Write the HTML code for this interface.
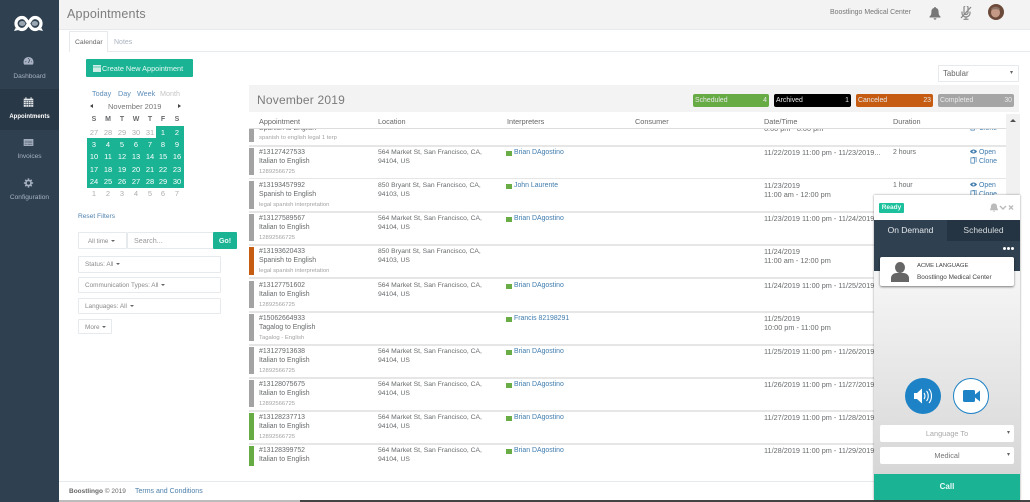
<!DOCTYPE html>
<html><head><meta charset="utf-8"><title>Appointments</title>
<style>
*{box-sizing:border-box}
html,body{margin:0;padding:0}
body{width:1030px;height:502px;overflow:hidden;position:relative;background:#fff;font-family:"Liberation Sans",sans-serif;font-size:6.9px;color:#676a6c;line-height:9px}
.a,.a>*{position:absolute}
.a{white-space:nowrap;filter:blur(.25px)}
.side{left:0;top:0;width:59px;height:502px;background:#2f4050}
.nav{left:0;width:59px;height:41px;text-align:center;color:#a7b1c2;font-size:6.6px}
.nav span{position:absolute;left:0;right:0;top:25px}
.nav svg{position:absolute;left:23px;top:8px}
.box{border:1px solid #e7eaec;background:#fff;border-radius:1px;color:#8a8a8a;font-size:6.4px;padding:3px 6px;white-space:nowrap}
.car{display:inline-block;border-top:2.5px solid #666;border-left:2.5px solid transparent;border-right:2.5px solid transparent;vertical-align:1px;margin-left:1px}
.cal{font-size:7.5px;text-align:center;width:14px;color:#676a6c}
.w{color:#fff}.g{color:#aeaeae}
.hd{font-weight:700;font-size:7px;top:115px}
.badge{top:94px;height:13px;border-radius:2px;color:#e9e9e9;font-size:6.9px;line-height:13px;padding:0 2px}
.badge b{font-weight:400;position:absolute;right:2px}
.sep{left:249px;width:757px;height:1.5px;background:#e6e6e6}
.r{left:249px;width:757px;height:30px}
.r>*{position:absolute;white-space:nowrap}
.bar{left:0;top:0;width:5px;height:27px;background:#a3a3a3}
.id{left:10px;top:0}.lg{left:10px;top:9px}.sb{left:10px;top:19.5px;font-size:5.9px;color:#a3a3a3}
.l1{left:129px;top:0;font-size:6.75px}.l2{left:129px;top:9px;font-size:6.75px}
.sq{left:257px;top:3px;width:6px;height:5px;background:#6aac46}
.nm{left:265px;top:0;color:#3f7cae}
.d1{left:515px;top:0;font-size:7.3px}.d2{left:515px;top:9px;font-size:7.3px}
.du{left:644px;top:0}
.op{left:721px;top:0;color:#3f7cae}.cl{left:721px;top:9px;color:#3f7cae}
.ic{display:inline-block;width:7px;height:7px;margin-right:2px;vertical-align:-1px}
.th{top:117px;color:#666;font-size:7.3px}
</style></head>
<body>

<div class="a" style="left:0;top:0;width:1030px;height:502px">
<div style="left:249px;top:85px;width:770px;height:27px;background:#f3f3f3"></div>
<div style="left:257px;top:92px;font-size:12px;line-height:17px;color:#7b7b7b;letter-spacing:.2px">November 2019</div>

<div class="badge" style="left:693px;width:76px;background:#67ab45">Scheduled<b>4</b></div>
<div class="badge" style="left:774px;width:77px;background:#000">Archived<b>1</b></div>
<div class="badge" style="left:856px;width:77px;background:#c55c11">Canceled<b>23</b></div>
<div class="badge" style="left:938px;width:76px;background:#a5a5a5">Completed<b>30</b></div>

<div class="box" style="left:938px;top:65px;width:81px;height:17px;color:#666;font-size:7.8px;padding:3px 4px">Tabular<span style="position:absolute;right:5px;top:3px;font-size:6px">▾</span></div>

<div class="th" style="left:259px">Appointment</div>
<div class="th" style="left:378px">Location</div>
<div class="th" style="left:507px">Interpreters</div>
<div class="th" style="left:635px">Consumer</div>
<div class="th" style="left:764px">Date/Time</div>
<div class="th" style="left:893px">Duration</div>

<div style="left:249px;top:129px;width:757px;height:16px;overflow:hidden">
 <div class="a" style="left:0;top:0;width:757px;height:16px;filter:none">
  <div style="left:0;top:0;width:5px;height:13px;background:#a3a3a3"></div>
  <div style="left:10px;top:-5px">Spanish to English</div>
  <div style="left:10px;top:5px;font-size:5.9px;color:#a3a3a3">spanish to english legal 1 terp</div>
  <div style="left:515px;top:-5px;font-size:7.3px">6:00 pm - 8:00 pm</div>
  <div style="left:721px;top:-5px;color:#3f7cae"><svg class="ic" viewBox="0 0 8 8"><path d="M1 1h4v6H1zM3 0h4v6" fill="none" stroke="#3f7cae" stroke-width=".8"/></svg>Clone</div>
 </div>
</div>
<div class="sep" style="top:128px;height:1px;background:#ddd"></div>
<div class="sep" style="top:145px"></div>

<div class="r" style="top:148px"><div class="bar"></div><div class="id">#13127427533</div><div class="lg">Italian to English</div><div class="sb">12892566725</div><div class="l1">564 Market St, San Francisco, CA,</div><div class="l2">94104, US</div><div class="sq"></div><div class="nm">Brian DAgostino</div><div class="d1">11/22/2019 11:00 pm - 11/23/2019...</div><div class="du">2 hours</div><div class="op"><svg class="ic" viewBox="0 0 8 8"><path d="M0 4c2-3 6-3 8 0-2 3-6 3-8 0z" fill="#3f7cae"/><circle cx="4" cy="4" r="1.2" fill="#fff"/></svg>Open</div><div class="cl"><svg class="ic" viewBox="0 0 8 8"><path d="M1 1h4v6H1zM3 0h4v6" fill="none" stroke="#3f7cae" stroke-width=".8"/></svg>Clone</div></div>
<div class="sep" style="top:177.5px"></div>

<div class="r" style="top:181px"><div class="bar" style="height:28px"></div><div class="id">#13193457992</div><div class="lg">Spanish to English</div><div class="sb">legal spanish interpretation</div><div class="l1">850 Bryant St, San Francisco, CA,</div><div class="l2">94103, US</div><div class="sq"></div><div class="nm">John Laurente</div><div class="d1">11/23/2019</div><div class="d2">11:00 am - 12:00 pm</div><div class="du">1 hour</div><div class="op"><svg class="ic" viewBox="0 0 8 8"><path d="M0 4c2-3 6-3 8 0-2 3-6 3-8 0z" fill="#3f7cae"/><circle cx="4" cy="4" r="1.2" fill="#fff"/></svg>Open</div><div class="cl"><svg class="ic" viewBox="0 0 8 8"><path d="M1 1h4v6H1zM3 0h4v6" fill="none" stroke="#3f7cae" stroke-width=".8"/></svg>Clone</div></div>
<div class="sep" style="top:211px"></div>

<div class="r" style="top:214px"><div class="bar"></div><div class="id">#13127589567</div><div class="lg">Italian to English</div><div class="sb">12892566725</div><div class="l1">564 Market St, San Francisco, CA,</div><div class="l2">94104, US</div><div class="sq"></div><div class="nm">Brian DAgostino</div><div class="d1">11/23/2019 11:00 pm - 11/24/2019...</div></div>
<div class="sep" style="top:244px"></div>

<div class="r" style="top:247px"><div class="bar" style="background:#c55c11;height:28px"></div><div class="id">#13193620433</div><div class="lg">Spanish to English</div><div class="sb">legal spanish interpretation</div><div class="l1">850 Bryant St, San Francisco, CA,</div><div class="l2">94103, US</div><div class="d1">11/24/2019</div><div class="d2">11:00 am - 12:00 pm</div></div>
<div class="sep" style="top:277px"></div>

<div class="r" style="top:281px"><div class="bar"></div><div class="id">#13127751602</div><div class="lg">Italian to English</div><div class="sb">12892566725</div><div class="l1">564 Market St, San Francisco, CA,</div><div class="l2">94104, US</div><div class="sq"></div><div class="nm">Brian DAgostino</div><div class="d1">11/24/2019 11:00 pm - 11/25/2019...</div></div>
<div class="sep" style="top:311px"></div>

<div class="r" style="top:314px"><div class="bar"></div><div class="id">#15062664933</div><div class="lg">Tagalog to English</div><div class="sb">Tagalog - English</div><div class="sq"></div><div class="nm">Francis 82198291</div><div class="d1">11/25/2019</div><div class="d2">10:00 pm - 11:00 pm</div></div>
<div class="sep" style="top:344px"></div>

<div class="r" style="top:347px"><div class="bar"></div><div class="id">#13127913638</div><div class="lg">Italian to English</div><div class="sb">12892566725</div><div class="l1">564 Market St, San Francisco, CA,</div><div class="l2">94104, US</div><div class="sq"></div><div class="nm">Brian DAgostino</div><div class="d1">11/25/2019 11:00 pm - 11/26/2019...</div></div>
<div class="sep" style="top:377px"></div>

<div class="r" style="top:380px"><div class="bar"></div><div class="id">#13128075675</div><div class="lg">Italian to English</div><div class="sb">12892566725</div><div class="l1">564 Market St, San Francisco, CA,</div><div class="l2">94104, US</div><div class="sq"></div><div class="nm">Brian DAgostino</div><div class="d1">11/26/2019 11:00 pm - 11/27/2019...</div></div>
<div class="sep" style="top:410px"></div>

<div class="r" style="top:413px"><div class="bar" style="background:#67ab45"></div><div class="id">#13128237713</div><div class="lg">Italian to English</div><div class="sb">12892566725</div><div class="l1">564 Market St, San Francisco, CA,</div><div class="l2">94104, US</div><div class="sq"></div><div class="nm">Brian DAgostino</div><div class="d1">11/27/2019 11:00 pm - 11/28/2019...</div></div>
<div class="sep" style="top:443px"></div>

<div class="r" style="top:446px;height:21px;overflow:hidden"><div class="bar" style="background:#67ab45;height:20px"></div><div class="id">#13128399752</div><div class="lg">Italian to English</div><div class="l1">564 Market St, San Francisco, CA,</div><div class="l2">94104, US</div><div class="sq"></div><div class="nm">Brian DAgostino</div><div class="d1">11/28/2019 11:00 pm - 11/29/2019...</div></div>

<!-- scrollbar -->
<div style="left:1006px;top:114px;width:14px;height:386px;background:#f1f1f1"></div>
<div style="left:1010px;top:119px;border-bottom:3.5px solid #505050;border-left:3px solid transparent;border-right:3px solid transparent"></div>

<!-- header -->
<div style="left:59px;top:0;width:971px;height:30px;background:#f3f3f3;border-bottom:1px solid #e7eaec"></div>
<div style="left:67px;top:5px;font-size:12.5px;line-height:18px;color:#7d7d7d;letter-spacing:.2px">Appointments</div>
<div style="left:830px;top:8px;font-size:6.95px;color:#777;line-height:10px">Boostlingo Medical Center</div>
<svg style="left:929px;top:7px" width="12" height="13" viewBox="0 0 12 13"><path d="M6 0c.6 0 1 .4 1 1 2 .5 2.600 2 2.600 4 0 2.400.7 3.600 1.900 4.600v.9H.5v-.9C1.700 8.600 2.400 7.400 2.400 5c0-2 .6-3.500 2.600-4 0-.6.400-1 1-1zM4.600 11.200h2.800a1.400 1.400 0 0 1-2.800 0z" fill="#777"/></svg>
<svg style="left:960px;top:6px" width="12" height="14" viewBox="0 0 12 14"><path d="M4 1.500a2 2 0 0 1 4 0v5a2 2 0 0 1-4 0zM2 5.500v1.500a4 4 0 0 0 8 0V5.500M6 11v2M3.500 13.300h5" fill="none" stroke="#888" stroke-width="1.200"/><path d="M1 12L11 1" stroke="#888" stroke-width="1.300"/></svg>
<svg style="left:988px;top:4px" width="16" height="16" viewBox="0 0 16 16"><circle cx="8" cy="8" r="8" fill="#6b4a3a"/><ellipse cx="7.500" cy="8.500" rx="4.500" ry="5" fill="#c49a86"/><path d="M3 5c2-3 7-3 9 0l-1 1c-2-1-5-1-7 0z" fill="#8c7264"/></svg>

<!-- tabs -->
<div style="left:108px;top:51px;width:922px;height:1px;background:#e7eaec"></div>
<div style="left:69px;top:31px;width:39px;height:21px;background:#fff;border:1px solid #e7eaec;border-bottom:none"></div>
<div style="left:75px;top:38px;font-size:6.8px;color:#666">Calendar</div>
<div style="left:114px;top:38px;font-size:7px;color:#a9b4bf">Notes</div>

<!-- create -->
<div style="left:86px;top:59px;width:107px;height:18px;background:#1ab394;border-radius:1px"></div>
<svg style="left:93px;top:64px" width="8" height="8" viewBox="0 0 8 8"><path d="M0 1h8v7H0z" fill="#cfeee7"/><path d="M0 3h8" stroke="#1ab394" stroke-width=".6"/></svg>
<div style="left:102px;top:63.5px;color:#e8f8f4;font-size:7.3px">Create New Appointment</div>

<!-- calendar -->
<div style="left:92px;top:89px;color:#5d8db8;font-size:7.2px">Today</div>
<div style="left:118px;top:89px;color:#5d8db8;font-size:7.2px">Day</div>
<div style="left:137px;top:89px;color:#5d8db8;font-size:7.2px">Week</div>
<div style="left:160px;top:89px;color:#c4c4c4;font-size:7.2px">Month</div>
<div style="left:90px;top:104px;border-right:3.5px solid #444;border-top:2.5px solid transparent;border-bottom:2.5px solid transparent"></div>
<div style="left:178px;top:104px;border-left:3.5px solid #444;border-top:2.5px solid transparent;border-bottom:2.5px solid transparent"></div>
<div style="left:108px;top:102px;font-size:7.5px;color:#777">November 2019</div>

<div style="left:87px;top:138px;width:97px;height:50px;background:#1ab394"></div>
<div style="left:156px;top:126px;width:28px;height:12px;background:#1ab394"></div>

<div class="cal hd" style="left:87px">S</div><div class="cal hd" style="left:101px">M</div><div class="cal hd" style="left:115px">T</div><div class="cal hd" style="left:129px">W</div><div class="cal hd" style="left:143px">T</div><div class="cal hd" style="left:156px">F</div><div class="cal hd" style="left:170px">S</div>

<div class="cal g" style="left:87px;top:128px">27</div><div class="cal g" style="left:101px;top:128px">28</div><div class="cal g" style="left:115px;top:128px">29</div><div class="cal g" style="left:129px;top:128px">30</div><div class="cal g" style="left:143px;top:128px">31</div><div class="cal w" style="left:156px;top:128px">1</div><div class="cal w" style="left:170px;top:128px">2</div>

<div class="cal w" style="left:87px;top:140px">3</div><div class="cal w" style="left:101px;top:140px">4</div><div class="cal w" style="left:115px;top:140px">5</div><div class="cal w" style="left:129px;top:140px">6</div><div class="cal w" style="left:143px;top:140px">7</div><div class="cal w" style="left:156px;top:140px">8</div><div class="cal w" style="left:170px;top:140px">9</div>

<div class="cal w" style="left:87px;top:152px">10</div><div class="cal w" style="left:101px;top:152px">11</div><div class="cal w" style="left:115px;top:152px">12</div><div class="cal w" style="left:129px;top:152px">13</div><div class="cal w" style="left:143px;top:152px">14</div><div class="cal w" style="left:156px;top:152px">15</div><div class="cal w" style="left:170px;top:152px">16</div>

<div class="cal w" style="left:87px;top:164.5px">17</div><div class="cal w" style="left:101px;top:164.5px">18</div><div class="cal w" style="left:115px;top:164.5px">19</div><div class="cal w" style="left:129px;top:164.5px">20</div><div class="cal w" style="left:143px;top:164.5px">21</div><div class="cal w" style="left:156px;top:164.5px">22</div><div class="cal w" style="left:170px;top:164.5px">23</div>

<div class="cal w" style="left:87px;top:176.5px">24</div><div class="cal w" style="left:101px;top:176.5px">25</div><div class="cal w" style="left:115px;top:176.5px">26</div><div class="cal w" style="left:129px;top:176.5px">27</div><div class="cal w" style="left:143px;top:176.5px">28</div><div class="cal w" style="left:156px;top:176.5px">29</div><div class="cal w" style="left:170px;top:176.5px">30</div>

<div class="cal g" style="left:87px;top:189px">1</div><div class="cal g" style="left:101px;top:189px">2</div><div class="cal g" style="left:115px;top:189px">3</div><div class="cal g" style="left:129px;top:189px">4</div><div class="cal g" style="left:143px;top:189px">5</div><div class="cal g" style="left:156px;top:189px">6</div><div class="cal g" style="left:170px;top:189px">7</div>

<!-- filters -->
<div style="left:78px;top:212px;color:#4f81ad;font-size:6.6px">Reset Filters</div>
<div class="box" style="left:78px;top:232px;width:49px;height:17px;font-size:6.2px;padding:4px 9px">All time <span class="car"></span></div>
<div class="box" style="left:127px;top:232px;width:87px;height:17px;font-size:7.2px;color:#999;padding:3px 6px">Search...</div>
<div style="left:213px;top:232px;width:24px;height:17px;background:#1ab394;border-radius:1px;color:#eafaf6;text-align:center;font-size:7.2px;font-weight:700;line-height:17px">Go!</div>
<div class="box" style="left:78px;top:256px;width:143px;height:17px">Status: All <span class="car"></span></div>
<div class="box" style="left:78px;top:277px;width:143px;height:16px">Communication Types: All <span class="car"></span></div>
<div class="box" style="left:78px;top:298px;width:143px;height:16px">Languages: All <span class="car"></span></div>
<div class="box" style="left:78px;top:319px;width:34px;height:15px;padding:2.5px 6px">More <span class="car"></span></div>

<!-- footer -->
<div style="left:59px;top:481px;width:815px;height:1px;background:#e7eaec"></div>
<div style="left:69px;top:487px;font-size:6.5px;color:#666"><b>Boostlingo</b> © 2019</div>
<div style="left:135px;top:487px;font-size:7px;color:#4f81ad">Terms and Conditions</div>
<div style="left:0;top:500px;width:1030px;height:2px;background:linear-gradient(90deg,#111 0,#111 34px,#bbb 34px,#bbb 300px,#444 300px,#444 1030px)"></div>

<!-- sidebar -->
<div class="side"></div>
<svg style="left:14px;top:15px" width="29" height="17" viewBox="0 0 29 17"><path d="M8 2.500a6 6 0 1 0 0 12c2.500 0 4-1.500 6.500-6 2.500-4.500 4-6 6.500-6a6 6 0 1 1 0 12c-2.500 0-4-1.500-6.500-6-2.500-4.500-4-6-6.500-6z" fill="#2f4050" stroke="#fff" stroke-width="3.200"/><ellipse cx="8.200" cy="8.500" rx="3.200" ry="2.500" fill="#9aa6b1"/><ellipse cx="20.800" cy="8.500" rx="3.200" ry="2.500" fill="#9aa6b1"/><path d="M1.500 13l-1.500 3 4.500-1zM27.500 13l1.500 3-4.500-1z" fill="#fff"/></svg>

<div class="nav" style="top:47px"><svg width="11" height="10" viewBox="0 0 15 13" style="top:9px"><path d="M7.500 1a6.800 6.800 0 0 0-6.800 6.800c0 1.400.3 2.600 1 3.700h11.600c.7-1.100 1-2.300 1-3.700A6.800 6.800 0 0 0 7.500 1z" fill="#a7b1c2"/><path d="M7.500 9l2-5M3 7.500h1.500M11 7.500h1M7.500 2.500v1.500" stroke="#2f4050" stroke-width="1"/></svg><span>Dashboard</span></div>

<div style="left:0;top:89px;width:59px;height:41px;background:#293846"></div>
<div class="nav" style="top:90px;color:#fff"><svg width="11" height="10" viewBox="0 0 15 13" style="top:7px"><path d="M1 2h13v11H1z" fill="#e8ebee"/><path d="M4 0v3M11 0v3" stroke="#e8ebee" stroke-width="1.500"/><path d="M1 4.500h13M1 7.200h13M1 10h13M4.200 4.500V13M7.500 4.500V13M10.800 4.500V13" stroke="#293846" stroke-width=".7"/></svg><span style="top:22.5px;font-weight:700;font-size:6px">Appointments</span></div>

<div class="nav" style="top:131px"><svg width="11" height="9" viewBox="0 0 15 13" style="top:6.5px"><path d="M.5 1.500h14v10H.5z" fill="#a7b1c2"/><path d="M2 4.500h11M2 7h3M6 7h7M2 9h3M6 9h7" stroke="#2f4050" stroke-width=".7"/></svg><span style="top:21px">Invoices</span></div>

<div class="nav" style="top:172px"><svg width="11" height="10" viewBox="0 0 13 13" style="top:6px"><circle cx="6.500" cy="6.500" r="3.300" fill="none" stroke="#a7b1c2" stroke-width="2.200"/><path d="M6.500 .5v2.500M6.500 10v2.500M.5 6.500h2.500M10 6.500h2.500M2.300 2.300L4 4M9 9l1.700 1.700M10.700 2.300L9 4M4 9l-1.700 1.700" stroke="#a7b1c2" stroke-width="2"/></svg><span style="top:21px">Configuration</span></div>

<!-- phone widget -->
<div style="left:874px;top:195px;width:146px;height:305px;background:linear-gradient(180deg,#f4f4f4 30%,#d6d6d6 92%);box-shadow:0 0 2px rgba(0,0,0,.45)"></div>
<div style="left:874px;top:195px;width:146px;height:25px;background:#fff"></div>
<div style="left:879px;top:203px;width:25px;height:10px;background:#1cc09c;border-radius:1px;color:#e6fbf5;font-weight:700;font-size:6.5px;line-height:10px;text-align:center">Ready</div>
<svg style="left:990px;top:203px" width="24" height="9" viewBox="0 0 24 9"><path d="M4 .5c2 0 3 1.200 3 3 0 1.500.5 2.300 1 3v.7H0v-.7c.5-.7 1-1.500 1-3 0-1.800 1-3 3-3zM3 7.800h2a1 1 0 0 1-2 0z" fill="#bbb"/><path d="M10 3l3 3 3-3" fill="none" stroke="#bbb" stroke-width="1.400"/><path d="M19 2.500l4 4M23 2.500l-4 4" stroke="#bbb" stroke-width="1.400"/></svg>

<div style="left:874px;top:220px;width:146px;height:51px;background:#2f4050"></div>
<div style="left:947px;top:220px;width:73px;height:21px;background:#243442"></div>
<div style="left:874px;top:220px;width:73px;height:21px;text-align:center;color:#e4e8ec;font-size:8.5px;line-height:21px">On Demand</div>
<div style="left:947px;top:220px;width:73px;height:21px;text-align:center;color:#d5dade;font-size:8.5px;line-height:21px">Scheduled</div>
<div style="left:1003px;top:247px;width:3px;height:3px;border-radius:50%;background:#fff;box-shadow:4px 0 0 #fff,8px 0 0 #fff"></div>

<div style="left:880px;top:257px;width:134px;height:29px;background:#fff;border-radius:2px;box-shadow:0 1px 2px rgba(0,0,0,.5)"></div>
<svg style="left:891px;top:262px" width="18" height="20" viewBox="0 0 18 20"><ellipse cx="9" cy="5.500" rx="5" ry="5.500" fill="#666"/><path d="M0 20v-4c0-3 3-5 5.500-5h7c2.500 0 5.500 2 5.500 5v4z" fill="#666"/></svg>
<div style="left:917px;top:262px;font-size:5.9px;color:#444">ACME LANGUAGE</div>
<div style="left:917px;top:273px;font-size:6.4px;color:#444">Boostlingo Medical Center</div>

<div style="left:905px;top:378px;width:36px;height:36px;border-radius:50%;background:#1e83c6"></div>
<svg style="left:914px;top:388px" width="19" height="16" viewBox="0 0 19 16"><path d="M0 5h3l5-4.500v15L3 11H0z" fill="#fff"/><path d="M10 5c1.300 1.700 1.300 4.300 0 6M12.500 3c2.300 2.700 2.300 7.300 0 10M15 1c3.300 3.700 3.300 10.300 0 14" fill="none" stroke="#fff" stroke-width="1.100"/></svg>
<div style="left:953px;top:378px;width:36px;height:36px;border-radius:50%;background:#fff;border:1.5px solid #1e83c6"></div>
<svg style="left:963px;top:389px" width="17" height="14" viewBox="0 0 17 14"><path d="M1.500 1h9a1.500 1.500 0 0 1 1.500 1.500v9a1.500 1.500 0 0 1-1.500 1.500h-9A1.500 1.500 0 0 1 0 11.500v-9A1.500 1.500 0 0 1 1.500 1z" fill="#1e83c6"/><path d="M12 5.500L17 1.500v11L12 8.500z" fill="#1e83c6"/></svg>

<div style="left:880px;top:425px;width:134px;height:17px;background:#fff;border-radius:2px;text-align:center;color:#aaa;font-size:7.35px;line-height:17px">Language To<span style="position:absolute;right:4px;top:0;color:#666;font-size:6px">▾</span></div>
<div style="left:880px;top:447px;width:134px;height:17px;background:#fff;border-radius:2px;text-align:center;color:#777;font-size:7.35px;line-height:17px">Medical<span style="position:absolute;right:4px;top:0;color:#666;font-size:6px">▾</span></div>
<div style="left:874px;top:474px;width:146px;height:26px;background:#1ab394;color:#eafaf6;font-weight:700;font-size:8px;line-height:26px;text-align:center">Call</div>
</div>
</body></html>
